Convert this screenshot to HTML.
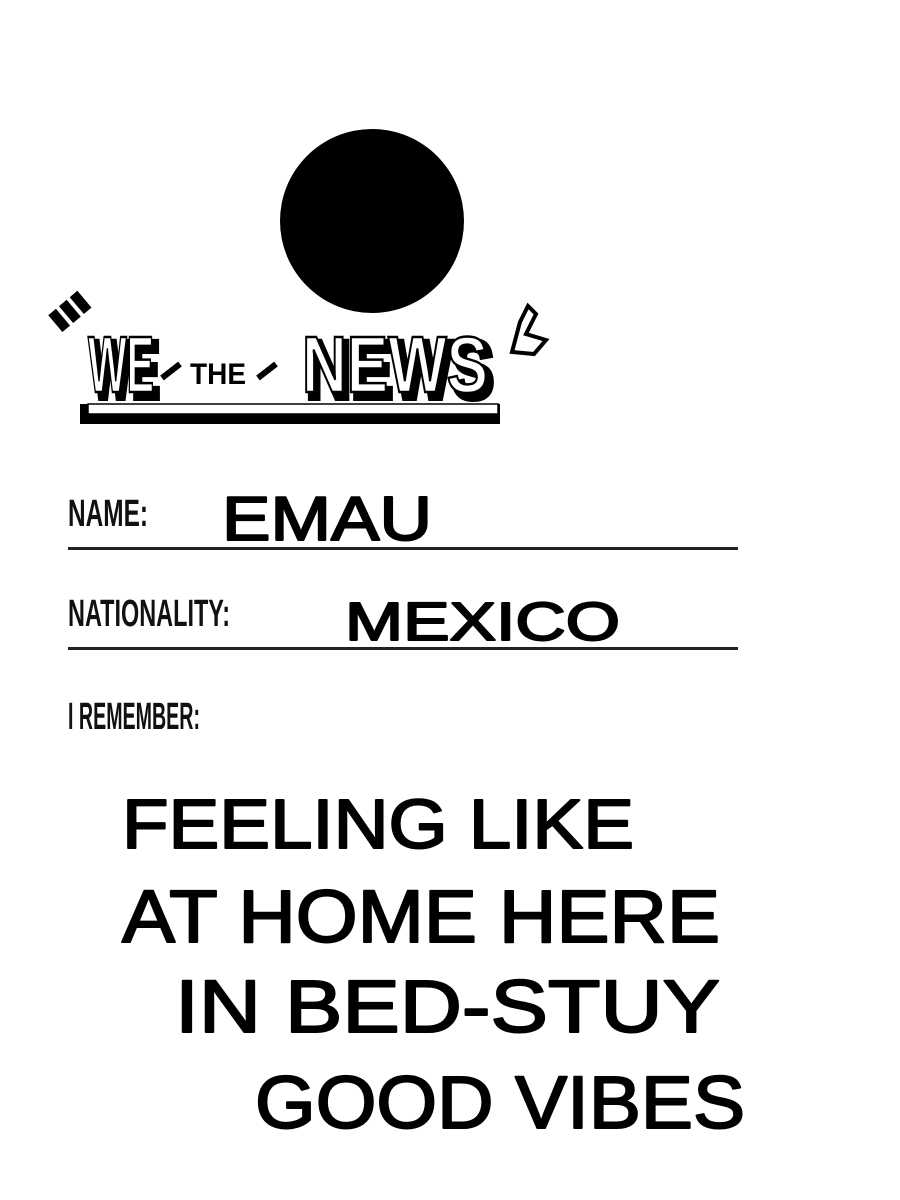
<!DOCTYPE html>
<html><head><meta charset="utf-8"><style>
html,body{margin:0;padding:0;background:#fff;width:900px;height:1200px;overflow:hidden}
</style></head><body>
<svg width="900" height="1200" viewBox="0 0 900 1200" xmlns="http://www.w3.org/2000/svg">
<rect width="900" height="1200" fill="#fff"/>
<circle cx="372" cy="221" r="92" fill="#000"/>
<g font-family="Liberation Sans, sans-serif" font-weight="bold">
  <g transform="rotate(-40 70 310)">
    <rect x="50" y="300" width="10" height="22" fill="#000"/>
    <rect x="64" y="300" width="10" height="22" fill="#000"/>
    <rect x="78" y="300" width="10" height="22" fill="#000"/>
  </g>
  <text x="92" y="398" font-size="82" fill="#000" textLength="68" lengthAdjust="spacingAndGlyphs" stroke="#000" stroke-width="6">WE</text>
  <text x="88" y="392" font-size="80" fill="#fff" textLength="66" lengthAdjust="spacingAndGlyphs" stroke="#000" stroke-width="2.5">WE</text>
  <text x="190" y="384" font-size="30" fill="#000" textLength="56" lengthAdjust="spacingAndGlyphs">THE</text>
  <path d="M162 378 l18 -14" stroke="#000" stroke-width="6"/>
  <path d="M258 378 l18 -14" stroke="#000" stroke-width="6"/>
  <text x="306" y="398" font-size="82" fill="#000" textLength="188" lengthAdjust="spacingAndGlyphs" stroke="#000" stroke-width="6">NEWS</text>
  <text x="302" y="392" font-size="80" fill="#fff" textLength="186" lengthAdjust="spacingAndGlyphs" stroke="#000" stroke-width="2.5">NEWS</text>
  <path d="M520 322 l8 -16 l8 8 l-10 20 l20 6 l-12 14 l-22 -2 z" fill="#fff" stroke="#000" stroke-width="4"/>
  <rect x="80" y="404" width="420" height="20" fill="#000"/>
  <rect x="88" y="404" width="410" height="10" fill="#fff" stroke="#000" stroke-width="1.5"/>
</g>
<g font-family="Liberation Sans Narrow, Liberation Sans, sans-serif" font-weight="bold" fill="#111">
  <text x="68" y="526" font-size="38" textLength="80" lengthAdjust="spacingAndGlyphs">NAME:</text>
  <text x="68" y="626" font-size="38" textLength="162" lengthAdjust="spacingAndGlyphs">NATIONALITY:</text>
  <text x="68" y="729" font-size="38" textLength="132" lengthAdjust="spacingAndGlyphs">I REMEMBER:</text>
</g>
<rect x="68" y="547" width="670" height="3" fill="#222"/>
<rect x="68" y="647" width="670" height="3" fill="#222"/>
<g font-family="Liberation Sans, sans-serif" fill="#000" stroke="#000" stroke-width="2" stroke-linejoin="round">
  <text x="222" y="540" font-size="62" textLength="210" lengthAdjust="spacingAndGlyphs">EMAU</text>
  <text x="345" y="640" font-size="54" textLength="275" lengthAdjust="spacingAndGlyphs">MEXICO</text>
  <text x="122" y="848" font-size="70" textLength="512" lengthAdjust="spacingAndGlyphs">FEELING LIKE</text>
  <text x="122" y="942" font-size="74" textLength="598" lengthAdjust="spacingAndGlyphs">AT HOME HERE</text>
  <text x="175" y="1032" font-size="74" textLength="545" lengthAdjust="spacingAndGlyphs">IN BED-STUY</text>
  <text x="255" y="1128" font-size="74" textLength="490" lengthAdjust="spacingAndGlyphs">GOOD VIBES</text>
</g>
</svg>
</body></html>
